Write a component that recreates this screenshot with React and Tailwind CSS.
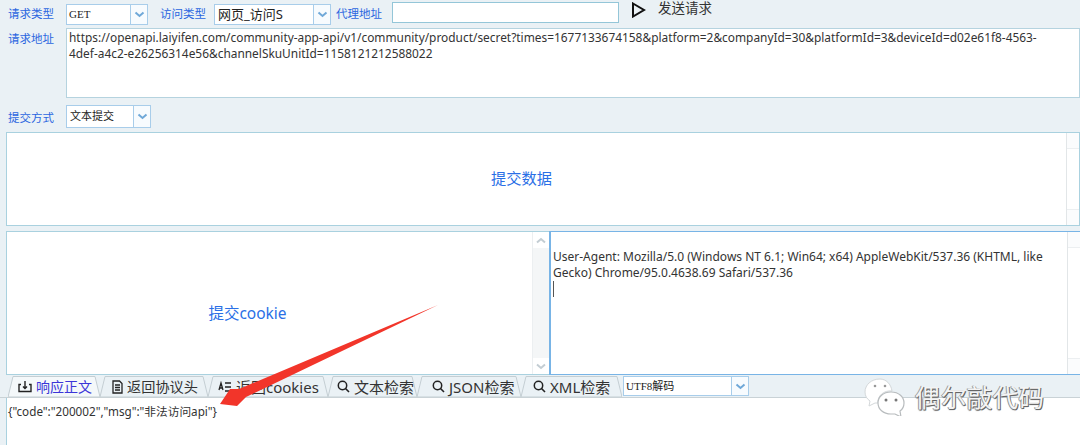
import React from "react";

const sans = "font-['Noto_Sans','Noto_Sans_CJK_SC',sans-serif]";

function Chevron() {
  return (
    <svg width="11" height="7" viewBox="0 0 11 7">
      <path d="M1.5 1.5 L5.5 5 L9.5 1.5" fill="none" stroke="#6fa8d8" strokeWidth="2" />
    </svg>
  );
}

function Select({ w, h, text, cls, btn }) {
  return (
    <div className={`flex shrink-0 bg-white border border-[#a8cdea] ${w} ${h}`}>
      <div className={`flex-1 flex items-center text-[#222] ${cls}`}>{text}</div>
      <div className={`flex items-center justify-center border-l border-[#a8cdea] bg-[#f7fbfe] ${btn}`}>
        <Chevron />
      </div>
    </div>
  );
}

function Label({ children, cls = "" }) {
  return <div className={`shrink-0 text-[11.5px] leading-[14px] text-[#2a66e0] ${cls}`}>{children}</div>;
}

function SideStub() {
  return (
    <div className="w-[13px] shrink-0 self-stretch border-l border-[#e2e6e8] bg-white flex flex-col justify-between">
      <div className="h-[16px] bg-[#fbfcfd] border-b border-[#eceff1]" />
      <div className="h-[16px] bg-[#fbfcfd] border-t border-[#eceff1]" />
    </div>
  );
}

function Tab({ icon, children, width, cls, pl, active, size }) {
  const pts = `0,21 5,0.5 ${width - 5},0.5 ${width},21`;
  return (
    <div className={`relative flex items-center gap-[4px] h-[21px] shrink-0 ${cls} ${pl}`}>
      <svg className="absolute left-0 top-0" width={width} height="21" viewBox={`0 0 ${width} 21`}>
        <polygon points={pts} fill={active ? "#f4f8fa" : "#eaf1f5"} stroke="#c4ced3" strokeWidth="1" />
      </svg>
      <span className="relative flex items-center">{icon}</span>
      <span className={`relative ${size} leading-[20px] whitespace-nowrap ${active ? "text-[#3b35d8]" : "text-[#333]"}`}>{children}</span>
    </div>
  );
}

const Search = (
  <svg width="13" height="13" viewBox="0 0 13 13" className="shrink-0">
    <circle cx="5.5" cy="5.5" r="4.2" fill="none" stroke="#222" strokeWidth="1.5" />
    <path d="M8.5 8.5 L12 12" stroke="#222" strokeWidth="1.6" />
  </svg>
);

const Upload = (
  <svg width="14" height="13" viewBox="0 0 14 13" className="shrink-0">
    <path d="M3 4.5 H1 V11.5 H13 V4.5 H11 M7 1 V8 M5 6.5 L7 8.5 L9 6.5" fill="none" stroke="#222" strokeWidth="1.4" />
  </svg>
);

const Doc = (
  <svg width="11" height="14" viewBox="0 0 11 14" className="shrink-0">
    <path d="M1 1 H7.5 L10 3.5 V13 H1 Z M3 5 H8 M3 7.5 H8 M3 10 H8" fill="none" stroke="#222" strokeWidth="1.3" />
  </svg>
);

const Rows = (
  <svg width="14" height="12" viewBox="0 0 14 12" className="shrink-0">
    <path d="M1 9 L3 2 L5 9 M1.8 7 H4.2 M7 2 H13 M7 6 H13 M7 10 H13" fill="none" stroke="#222" strokeWidth="1.3" />
  </svg>
);

function Up({ down }) {
  return (
    <svg width="10" height="7" viewBox="0 0 10 7">
      <path d={down ? "M1 1.5 L5 5 L9 1.5" : "M1 5.5 L5 2 L9 5.5"} fill="none" stroke="#c3cdd3" strokeWidth="2" />
    </svg>
  );
}

function Watermark() {
  return (
    <div className="absolute left-[862px] top-[376px] flex items-start">
      <svg width="44" height="40" viewBox="0 0 44 40">
        <path d="M18 3 C9 3 3 9 3 16 C3 20 5 23 8 25 L7 30 L13 27 L16 27 C15 20 22 14 30 15 C29 8 24 3 18 3 Z" fill="#fff" stroke="#d4d8da" strokeWidth="1" />
        <path d="M29 16 C21 16 16 21 16 27 C16 33 21 38 29 38 L33 38 L39 41 L38 35 C41 33 42 30 42 27 C42 21 37 16 29 16 Z" fill="#fff" stroke="#b8bcbe" strokeWidth="1.2" />
        <circle cx="13" cy="10" r="1.3" fill="#999" />
        <circle cx="23" cy="10" r="1.3" fill="#999" />
        <circle cx="24" cy="24" r="1.5" fill="#777" />
        <circle cx="34" cy="24" r="1.5" fill="#777" />
      </svg>
      <div className="ml-[9px] text-[25.5px] leading-[42px] tracking-[0.4px] text-[#f4f4f4] [text-shadow:1px_1px_0_#666,-1px_0_0_#999,0_1px_1px_#555]">偶尔敲代码</div>
    </div>
  );
}

export default function App() {
  return (
    <div className={`relative w-[1080px] h-[445px] overflow-hidden bg-[#eaf1f5] ${sans}`}>
      <div className="flex items-start h-[28px]">
        <Label cls="w-[66px] pl-[8px] pt-[7px]">请求类型</Label>
        <div className="pt-[4px]">
          <Select w="w-[82px]" h="h-[21px]" text="GET" cls="pl-[2px] font-['Liberation_Serif','Noto_Sans_CJK_SC',serif] text-[11px]" btn="w-[17px]" />
        </div>
        <Label cls="ml-[12px] w-[54px] pt-[7px]">访问类型</Label>
        <div className="pt-[4px]">
          <Select w="w-[117px]" h="h-[21px]" text="网页_访问S" cls="pl-[3px] text-[13px]" btn="w-[17px]" />
        </div>
        <Label cls="ml-[5px] w-[56px] pt-[7px]">代理地址</Label>
        <div className="pt-[2px]">
          <div className="w-[227px] h-[21px] bg-white border border-[#94c6d8]" />
        </div>
        <div className="ml-[12px] pt-[2px]">
          <svg width="15" height="16" viewBox="0 0 15 16">
            <path d="M2 1.5 L13 8 L2 14.5 Z" fill="none" stroke="#111" strokeWidth="2" />
          </svg>
        </div>
        <div className="ml-[12px] text-[13.5px] leading-[16px] text-[#333]">发送请求</div>
      </div>

      <div className="flex items-start h-[70px]">
        <Label cls="w-[66px] pl-[8px] pt-[4px]">请求地址</Label>
        <div className="flex-1 h-[70px] bg-white border border-[#b5d3df] pl-[2px] text-[11.9px] leading-[16px] text-[#333] break-all">
          https://openapi.laiyifen.com/community-app-api/v1/community/product/secret?times=1677133674158&amp;platform=2&amp;companyId=30&amp;platformId=3&amp;deviceId=d02e61f8-4563-
          <br />
          4def-a4c2-e26256314e56&amp;channelSkuUnitId=1158121212588022
        </div>
      </div>

      <div className="flex items-start h-[34px]">
        <Label cls="w-[66px] pl-[8px] pt-[13px]">提交方式</Label>
        <div className="pt-[7px]">
          <Select w="w-[85px]" h="h-[23px]" text="文本提交" cls="text-[11px] pl-[3px]" btn="w-[17px]" />
        </div>
      </div>

      <div className="ml-[6px] h-[94px] flex bg-white border border-[#a9d1df]">
        <div className="flex-1 flex items-center justify-center pr-[30px] pb-[2px] text-[15.25px] text-[#2a6fe6]">提交数据</div>
        <SideStub />
      </div>

      <div className="ml-[6px] mt-[5px] h-[144px] flex">
        <div className="w-[543px] flex bg-white border border-[#a9d1df] border-r-0">
          <div className="flex-1 flex items-center justify-center pr-[44px] pt-[22px] text-[15.5px] text-[#2a6fe6]">提交cookie</div>
          <div className="w-[17px] border-l border-[#eceff1] bg-[#f4f6f7] flex flex-col justify-between">
            <div className="h-[16px] bg-white flex items-center justify-center"><Up /></div>
            <div className="h-[16px] bg-white flex items-center justify-center"><Up down /></div>
          </div>
        </div>
        <div className="flex-1 flex bg-white border-l-2 border-t border-b border-[#78b4e6]">
          <div className="flex-1 pl-[2px] pt-[17px] text-[12px] leading-[16px] text-[#333]">
            User-Agent: Mozilla/5.0 (Windows NT 6.1; Win64; x64) AppleWebKit/537.36 (KHTML, like
            <br />
            Gecko) Chrome/95.0.4638.69 Safari/537.36
            <div className="w-[1px] h-[16px] bg-[#555]" />
          </div>
          <SideStub />
        </div>
      </div>

      <div className="flex items-end h-[23px] pl-[8px] border-b border-[#c9d2d6]">
        <Tab icon={Upload} width={92} cls="w-[92px]" pl="pl-[10px]" size="text-[14px]" active>响应正文</Tab>
        <Tab icon={Doc} width={108} cls="w-[108px]" pl="pl-[12px]" size="text-[14.2px]">返回协议头</Tab>
        <Tab icon={Rows} width={120} cls="w-[120px]" pl="pl-[10px]" size="text-[15px]">返回cookies</Tab>
        <Tab icon={Search} width={89} cls="w-[89px]" pl="pl-[9px]" size="text-[15px]">文本检索</Tab>
        <Tab icon={Search} width={104} cls="w-[104px]" pl="pl-[15px]" size="text-[15px]">JSON检索</Tab>
        <Tab icon={Search} width={101} cls="w-[101px]" pl="pl-[12px]" size="text-[15px]">XML检索</Tab>
        <div className="pb-[1px] self-end ml-[1px]">
          <Select w="w-[126px]" h="h-[20px]" text="UTF8解码" cls="pl-[2px] font-['Liberation_Serif','Noto_Sans_CJK_SC',serif] text-[11px]" btn="w-[17px]" />
        </div>
      </div>

      <div className="ml-[6px] h-[47px] bg-white border-l border-[#a9d1df] pl-[1px] pt-[5px] text-[11.7px] leading-[16px] text-[#333]">
        {'{"code":"200002","msg":"非法访问api"}'}
      </div>

      <svg className="absolute left-0 top-0 pointer-events-none" width="1080" height="445" viewBox="0 0 1080 445">
        <path d="M438 305 L246 397 L237 406 L220 404 L230 389 L239 389 Z" fill="#f2352a" />
      </svg>
      <Watermark />
    </div>
  );
}
